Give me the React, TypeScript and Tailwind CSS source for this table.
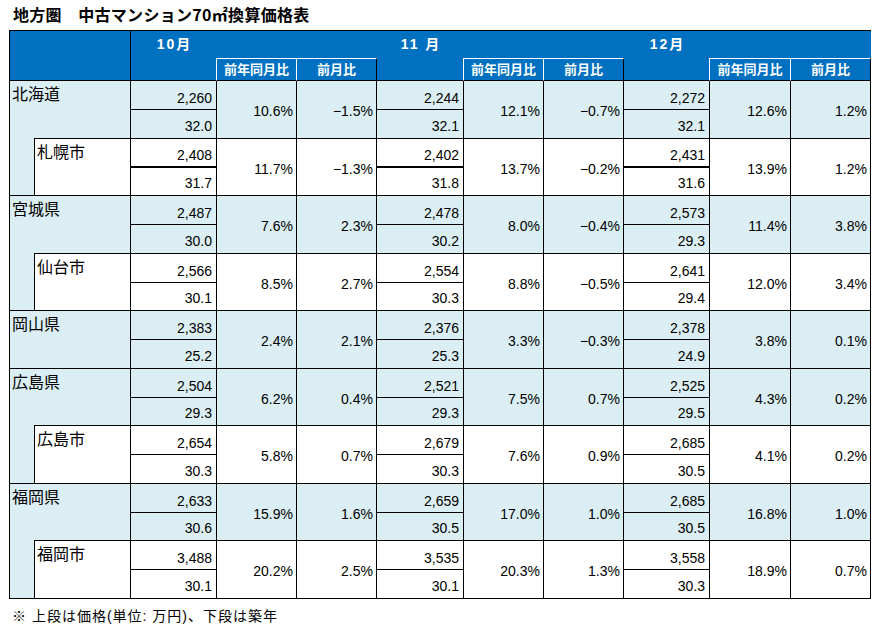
const BLUE_BG = 'bg-[#0070c0]';

type Month = { price: string; age: string; yoy: string; mom: string };
type Row = { name: string; city?: boolean; thick?: boolean; months: Month[] };

const m = (price: string, age: string, yoy: string, mom: string): Month => ({ price, age, yoy, mom });

const rows: Row[] = [
  { name: '北海道', months: [m('2,260', '32.0', '10.6%', '−1.5%'), m('2,244', '32.1', '12.1%', '−0.7%'), m('2,272', '32.1', '12.6%', '1.2%')] },
  { name: '札幌市', city: true, thick: true, months: [m('2,408', '31.7', '11.7%', '−1.3%'), m('2,402', '31.8', '13.7%', '−0.2%'), m('2,431', '31.6', '13.9%', '1.2%')] },
  { name: '宮城県', months: [m('2,487', '30.0', '7.6%', '2.3%'), m('2,478', '30.2', '8.0%', '−0.4%'), m('2,573', '29.3', '11.4%', '3.8%')] },
  { name: '仙台市', city: true, months: [m('2,566', '30.1', '8.5%', '2.7%'), m('2,554', '30.3', '8.8%', '−0.5%'), m('2,641', '29.4', '12.0%', '3.4%')] },
  { name: '岡山県', months: [m('2,383', '25.2', '2.4%', '2.1%'), m('2,376', '25.3', '3.3%', '−0.3%'), m('2,378', '24.9', '3.8%', '0.1%')] },
  { name: '広島県', months: [m('2,504', '29.3', '6.2%', '0.4%'), m('2,521', '29.3', '7.5%', '0.7%'), m('2,525', '29.5', '4.3%', '0.2%')] },
  { name: '広島市', city: true, months: [m('2,654', '30.3', '5.8%', '0.7%'), m('2,679', '30.3', '7.6%', '0.9%'), m('2,685', '30.5', '4.1%', '0.2%')] },
  { name: '福岡県', months: [m('2,633', '30.6', '15.9%', '1.6%'), m('2,659', '30.5', '17.0%', '1.0%'), m('2,685', '30.5', '16.8%', '1.0%')] },
  { name: '福岡市', city: true, months: [m('3,488', '30.1', '20.2%', '2.5%'), m('3,535', '30.1', '20.3%', '1.3%'), m('3,558', '30.3', '18.9%', '0.7%')] },
];

// column widths (including right border) per month block
const priceW = ['w-[86px]', 'w-[87px]', 'w-[86px]'];
const yoyW = ['w-[80px]', 'w-[80px]', 'w-[81px]'];
const headPriceW = ['w-[85px]', 'w-[86px]', 'w-[85px]'];
const headYoyW = ['w-[81px]', 'w-[81px]', 'w-[82px]'];
const monthLabels = ['10月', '11 月', '12月'];

const font = "font-['Liberation_Sans','Noto_Sans_CJK_JP',sans-serif]";

function Header() {
  return (
    <div className={`flex h-[50px] ${BLUE_BG} text-white font-bold`}>
      <div className="w-[121px] h-full border-r border-b border-black" />
      {monthLabels.map((label, i) => (
        <div key={label} className="flex h-full">
          <div className={`${headPriceW[i]} h-full border-b border-black`}>
            <div className="h-[27px] flex items-center justify-center text-[14px] tracking-[2px] pl-[2px]">
              {label}
            </div>
          </div>
          <div className="flex flex-col h-full">
            <div className="h-[27px]" />
            <div className="flex h-[23px]">
              <div className={`${headYoyW[i]} h-full border-t border-l border-r border-white border-b border-b-black flex items-center justify-center text-[13px]`}>
                前年同月比
              </div>
              <div className="w-[80px] h-full border-t border-t-white border-r border-r-black border-b border-b-black flex items-center justify-center text-[13px]">
                前月比
              </div>
            </div>
          </div>
        </div>
      ))}
    </div>
  );
}

function DataRow({ row, idx, nextIsCity }: { row: Row; idx: number; nextIsCity: boolean }) {
  const tall = idx % 2 === 0;
  const h = tall ? 'h-[58px]' : 'h-[57px]';
  const bg = row.city ? 'bg-white' : 'bg-[#daeef3]';
  return (
    <div className={`flex ${h} ${bg}`}>
      {row.city ? (
        <>
          <div className="w-[24px] h-full bg-[#daeef3] border-b border-black" />
          <div className="w-[97px] h-[calc(100%+1px)] -mt-px bg-white border border-black pl-[2px] pt-[4px] text-[16px] leading-[20px]">
            {row.name}
          </div>
        </>
      ) : (
        <div
          className={`w-[121px] h-full border-r border-black pl-[2px] pt-[4px] text-[16px] leading-[20px] ${
            nextIsCity ? '' : 'border-b'
          }`}
        >
          {row.name}
        </div>
      )}
      {row.months.map((mo, i) => (
        <div key={i} className="flex h-full">
          <div className={`${priceW[i]} h-full flex flex-col border-r border-black`}>
            <div
              className={`h-[29px] flex items-end justify-end pr-[4px] pb-[3px] leading-[16px] border-black ${
                row.thick ? 'border-b-2' : 'border-b'
              }`}
            >
              {mo.price}
            </div>
            <div className="flex-1 flex items-end justify-end pr-[4px] pb-[4px] leading-[16px] border-b border-black">
              {mo.age}
            </div>
          </div>
          <div className={`${yoyW[i]} h-full flex items-center justify-end pr-[3px] pt-[3px] leading-[16px] border-r border-b border-black`}>
            {mo.yoy}
          </div>
          <div className="w-[80px] h-full flex items-center justify-end pr-[3px] pt-[3px] leading-[16px] border-r border-b border-black">
            {mo.mom}
          </div>
        </div>
      ))}
    </div>
  );
}

export default function App() {
  return (
    <div className={`w-[880px] h-[631px] bg-white text-black text-[14px] ${font}`}>
      <div className="h-[30px] pl-[13px] text-[16px] font-bold leading-[28px] font-['Noto_Sans_CJK_JP',sans-serif] tracking-[0.3px]">
        地方圏　中古マンション70㎡換算価格表
      </div>
      <div className="ml-[9px] w-[862px] border-l border-t border-black">
        <Header />
        {rows.map((row, idx) => (
          <DataRow key={row.name} row={row} idx={idx} nextIsCity={!!rows[idx + 1]?.city} />
        ))}
      </div>
      <div className="pl-[12px] pt-[8px] text-[14px] leading-[18px] tracking-[1px]">
        ※ 上段は価格(単位: 万円)、下段は築年
      </div>
    </div>
  );
}
